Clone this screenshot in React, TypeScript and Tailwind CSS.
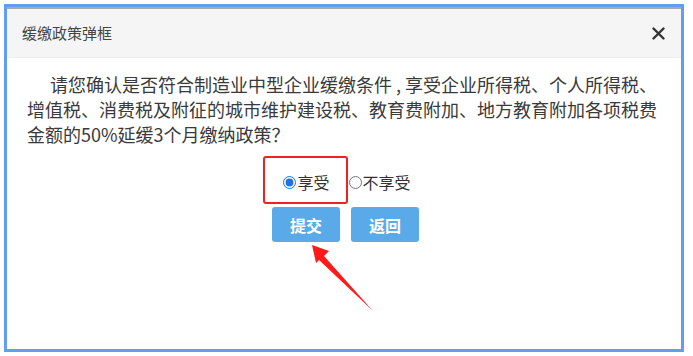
import React from 'react'

function Arrow() {
  return (
    <svg className="absolute left-0 top-0 pointer-events-none" width="693" height="356" viewBox="0 0 693 356">
      <polygon points="312,245 329,251 324,256 373,311 319,260 316,263" fill="#ff1a1a" />
    </svg>
  )
}

export default function App() {
  return (
    <div className="relative w-[693px] h-[356px] bg-white overflow-hidden" style={{ fontFamily: '"Noto Sans CJK SC", "Noto Sans", sans-serif' }}>
      <div className="ml-[4px] mt-[4px] w-[680px] h-[348px] border-[3px] border-[#629ef0] flex flex-col">
        <div className="h-[2px] bg-[#a9a9a9]"></div>
        <div className="h-[49px] bg-[#f5f5f5] border-b border-[#ececec] flex items-center justify-between pl-[15px] pr-[16px]">
          <span className="text-[15px] text-[#444]">缓缴政策弹框</span>
          <svg width="13" height="13" viewBox="0 0 13 13">
            <path d="M1.5 1.5 L11.5 11.5 M11.5 1.5 L1.5 11.5" stroke="#333" strokeWidth="2.4" strokeLinecap="round" />
          </svg>
        </div>
        <div className="pt-[14px] pl-[20px]">
          <p className="text-[18px] leading-[25px] text-[#3a3a3a] indent-[23px] whitespace-nowrap">
            请您确认是否符合制造业中型企业缓缴条件 , 享受企业所得税、个人所得税、<br />
            增值税、消费税及附征的城市维护建设税、教育费附加、地方教育附加各项税费<br />
            金额的50%延缓3个月缴纳政策？
          </p>
        </div>
        <div className="mt-[23px] h-[24px] flex items-center justify-center pl-[6px] text-[16px] text-[#333]">
          <label className="flex items-center">
            <input type="radio" name="enjoy" defaultChecked className="w-[13px] h-[13px] accent-[#1a73e8]" />
            <span className="ml-[1px]">享受</span>
          </label>
          <label className="flex items-center ml-[19px]">
            <input type="radio" name="enjoy" className="w-[13px] h-[13px]" />
            <span className="ml-[1px]">不享受</span>
          </label>
        </div>
        <div className="mt-[13px] flex justify-center gap-[11px] pl-[3px]">
          <button className="w-[68px] h-[35px] rounded-[3px] bg-[#5aaaea] text-white text-[16px] font-bold">提交</button>
          <button className="w-[68px] h-[35px] rounded-[3px] bg-[#5aaaea] text-white text-[16px] font-bold">返回</button>
        </div>
      </div>
      <div className="absolute left-[263px] top-[156px] w-[85px] h-[48px] border-2 border-[#ee2222] rounded-[3px]"></div>
      <Arrow />
    </div>
  )
}
